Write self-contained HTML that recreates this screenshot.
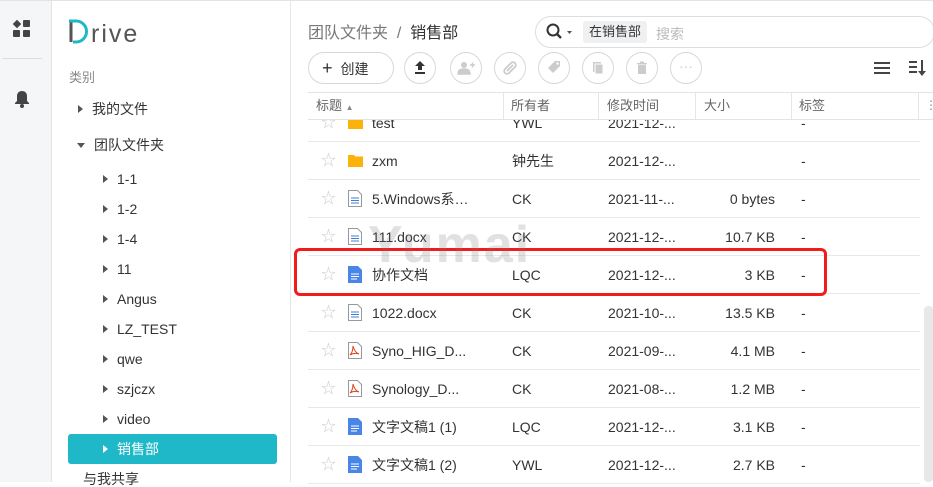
<!DOCTYPE html><html><head><meta charset="utf-8"><style>
*{box-sizing:border-box;margin:0;padding:0}
body{width:933px;height:481px;overflow:hidden;background:#fff;font-family:"Liberation Sans","Noto Sans CJK SC",sans-serif;color:#333;position:relative;font-size:14px;border-top:1px solid #e3e3e3}
.a{position:absolute}
.rail{left:0;top:0;width:52px;height:481px;background:#f5f6f8;border-right:1px solid #e3e3e3}
.side{left:53px;top:0;width:238px;height:481px;border-right:1px solid #e6e6e6}
.tr{position:absolute;font-size:14px;line-height:16px;color:#333;white-space:nowrap}
.tri{display:inline-block;width:0;height:0;border-left:5px solid #555;border-top:4px solid transparent;border-bottom:4px solid transparent;margin-right:9px;vertical-align:1px}
.trd{display:inline-block;width:0;height:0;border-top:5px solid #555;border-left:4px solid transparent;border-right:4px solid transparent;margin-right:9px;vertical-align:2px}
.cb{position:absolute;top:51px;width:32px;height:32px;border:1px solid #d8d8d8;border-radius:50%;background:#fff}
.row{position:absolute;left:308px;width:612px;height:38px;border-bottom:1px solid #e8e8e8;font-size:14px;color:#333}
.row span{position:absolute;top:11px;line-height:16px;white-space:nowrap}
.row span.st{left:13px;color:#ccc;font-size:15px;top:11px}
.h{position:absolute;top:97px;font-size:13px;line-height:15px;color:#666}
.sep{position:absolute;top:92px;width:1px;height:26px;background:#e6e6e6}
</style></head><body>
<div class="a rail">
 <svg class="a" style="left:12px;top:18px" width="20" height="20" viewBox="0 0 20 20"><rect x="2" y="2" width="6" height="6" transform="rotate(45 5 5)" fill="#444"/><rect x="11" y="1" width="7" height="7" rx="1" fill="#444"/><rect x="1" y="11" width="7" height="7" rx="1" fill="#444"/><rect x="11" y="11" width="7" height="7" rx="1" fill="#444"/></svg>
 <div class="a" style="left:2px;top:57px;width:40px;height:1px;background:#ddd"></div>
 <svg class="a" style="left:14px;top:89px" width="16" height="18" viewBox="0 0 16 18"><path d="M8 1c-3 0-5 2-5 5v5l-2 2v1h14v-1l-2-2V6c0-3-2-5-5-5z" fill="#444"/><circle cx="8" cy="16" r="2" fill="#444"/></svg>
</div>
<div class="a side">
 <svg class="a" style="left:16px;top:17px" width="80" height="28" viewBox="0 0 80 28"><path d="M2 3v21" stroke="#555" stroke-width="3"/><path d="M0 3h7a10.5 10.5 0 0 1 0 21H4" stroke="#1fb8c8" stroke-width="3" fill="none"/><text x="22" y="24" font-family="Liberation Sans,sans-serif" font-size="25" fill="#555" letter-spacing="2">rive</text></svg>
 <div class="a" style="left:16px;top:66px;font-size:13px;color:#888">类别</div>
</div>
<div class="tr" style="left:78px;top:100px"><i class="tri"></i>我的文件</div>
<div class="tr" style="left:77px;top:136px"><i class="trd"></i>团队文件夹</div>
<div class="tr" style="left:103px;top:170px"><i class="tri"></i>1-1</div>
<div class="tr" style="left:103px;top:200px"><i class="tri"></i>1-2</div>
<div class="tr" style="left:103px;top:230px"><i class="tri"></i>1-4</div>
<div class="tr" style="left:103px;top:260px"><i class="tri"></i>11</div>
<div class="tr" style="left:103px;top:290px"><i class="tri"></i>Angus</div>
<div class="tr" style="left:103px;top:320px"><i class="tri"></i>LZ_TEST</div>
<div class="tr" style="left:103px;top:350px"><i class="tri"></i>qwe</div>
<div class="tr" style="left:103px;top:380px"><i class="tri"></i>szjczx</div>
<div class="tr" style="left:103px;top:410px"><i class="tri"></i>video</div>
<div class="a" style="left:68px;top:433px;width:209px;height:30px;background:#1fb8c8;border-radius:3px"></div>
<div class="tr" style="left:103px;top:440px;color:#fff"><i class="tri" style="border-left-color:#fff"></i>销售部</div>
<div class="tr" style="left:83px;top:470px">与我共享</div>

<div class="a" style="left:308px;top:24px;font-size:16px;line-height:18px;color:#777">团队文件夹 &nbsp;/ &nbsp;<span style="color:#333">销售部</span></div>
<div class="a" style="left:535px;top:15px;width:400px;height:32px;border:1px solid #ddd;border-radius:16px"></div>
<svg class="a" style="left:546px;top:22px" width="30" height="18" viewBox="0 0 30 18"><circle cx="7" cy="7" r="5.5" stroke="#333" stroke-width="2" fill="none"/><path d="M11 11l4 4" stroke="#333" stroke-width="2.4"/><path d="M21 8h5l-2.5 3z" fill="#555"/></svg>
<div class="a" style="left:583px;top:20px;height:22px;padding:0 6px;background:#eef0f2;border-radius:3px;font-size:13px;line-height:22px">在销售部</div>
<div class="a" style="left:656px;top:23px;font-size:14px;color:#bbb">搜索</div>

<div class="a" style="left:308px;top:51px;width:86px;height:32px;border:1px solid #d8d8d8;border-radius:16px;font-size:14px;line-height:30px;padding-left:13px"><b style="font-size:18px;font-weight:normal;margin-right:8px">+</b>创建</div>
<div class="cb" style="left:404px"><svg width="30" height="30" viewBox="0 0 30 30"><path d="M15 8l-5 5h3v4h4v-4h3z M10 19h10v2H10z" fill="#333"/></svg></div>
<div class="cb" style="left:450px"><svg width="30" height="30" viewBox="0 0 30 30"><circle cx="13" cy="12" r="3" fill="#ccc"/><path d="M7 21c0-4 3-5 6-5s6 1 6 5z M19 12h5M21.5 9.5v5" fill="#ccc" stroke="#ccc" stroke-width="1.4"/></svg></div>
<div class="cb" style="left:494px"><svg width="30" height="30" viewBox="0 0 30 30"><path d="M12 18l6-6M13 13l-3 3a2.5 2.5 0 0 0 4 4l3-3M17 17l3-3a2.5 2.5 0 0 0-4-4l-3 3" stroke="#ccc" stroke-width="1.8" fill="none"/></svg></div>
<div class="cb" style="left:538px"><svg width="30" height="30" viewBox="0 0 30 30"><path d="M9 15l7-7h5v5l-7 7z" fill="#ccc"/><circle cx="18.5" cy="10.5" r="1.2" fill="#fff"/></svg></div>
<div class="cb" style="left:582px"><svg width="30" height="30" viewBox="0 0 30 30"><rect x="10" y="9" width="8" height="10" fill="#ccc"/><rect x="12" y="11" width="8" height="10" fill="#ccc" stroke="#fff"/></svg></div>
<div class="cb" style="left:626px"><svg width="30" height="30" viewBox="0 0 30 30"><path d="M10 10h10v1.5H10zM13 8.5h4v1.5h-4zM11 12h8v9h-8z" fill="#ccc"/></svg></div>
<div class="cb" style="left:670px;color:#ccc;text-align:center;line-height:26px;font-size:14px">···</div>
<svg class="a" style="left:873px;top:59px" width="18" height="16"><path d="M1 3h16M1 8h16M1 13h16" stroke="#444" stroke-width="2"/></svg>
<svg class="a" style="left:908px;top:58px" width="20" height="18"><path d="M1 3h8M1 8h8M1 13h8" stroke="#444" stroke-width="2"/><path d="M14 1v13" stroke="#444" stroke-width="2"/><path d="M10 12l4 5 4-5z" fill="#444"/></svg>

<div id="rows"></div>
<script>
var F='<svg width="15" height="13" viewBox="0 0 15 13"><path d="M0 1h6l1.5 1.5H15V13H0z" fill="#fbb30b"/></svg>';
var D='<svg width="14" height="17" viewBox="0 0 14 17"><path d="M.5.5h9l4 4v12h-13z" fill="#fff" stroke="#999"/><path d="M3 8h8M3 10.5h8M3 13h8" stroke="#3a7fd8"/></svg>';
var G='<svg width="14" height="17" viewBox="0 0 14 17"><path d="M0 0h10l4 4v13H0z" fill="#4a86e8"/><path d="M3 8h8M3 10.5h8M3 13h6" stroke="#fff"/></svg>';
var P='<svg width="14" height="17" viewBox="0 0 14 17"><path d="M.5.5h9l4 4v12h-13z" fill="#fff" stroke="#999"/><path d="M5 4c0 4-1 7-3 9 3-2 6-2 9-1-3-1-5-4-6-8z" stroke="#e0441b" fill="none"/></svg>';
var r=[[F,'test','YWL','2021-12-...','','-'],[F,'zxm','钟先生','2021-12-...','','-'],[D,'5.Windows系…','CK','2021-11-...','0 bytes','-'],[D,'111.docx','CK','2021-12-...','10.7 KB','-'],[G,'协作文档','LQC','2021-12-...','3 KB','-'],[D,'1022.docx','CK','2021-10-...','13.5 KB','-'],[P,'Syno_HIG_D...','CK','2021-09-...','4.1 MB','-'],[P,'Synology_D...','CK','2021-08-...','1.2 MB','-'],[G,'文字文稿1 (1)','LQC','2021-12-...','3.1 KB','-'],[G,'文字文稿1 (2)','YWL','2021-12-...','2.7 KB','-']];
var h='';r.forEach(function(x,i){var t=103+i*38;h+='<div class="row" style="top:'+t+'px"><span class="st">☆</span><span style="left:40px;top:'+(i<2?12:10)+'px">'+x[0]+'</span><span style="left:64px">'+x[1]+'</span><span style="left:204px">'+x[2]+'</span><span style="left:300px">'+x[3]+'</span><span style="right:145px">'+x[4]+'</span><span style="left:493px">'+x[5]+'</span></div>';});
document.getElementById('rows').innerHTML=h;
</script>
<div class="a" style="left:308px;top:91px;width:625px;height:28px;background:#fff;border-top:1px solid #e3e3e3;border-bottom:1px solid #e3e3e3"></div>
<div class="h" style="left:316px">标题 <span style="font-size:8px;color:#888">▲</span></div>
<div class="h" style="left:511px">所有者</div><div class="h" style="left:607px">修改时间</div><div class="h" style="left:704px">大小</div><div class="h" style="left:799px">标签</div>
<div class="sep" style="left:503px"></div><div class="sep" style="left:598px"></div><div class="sep" style="left:695px"></div><div class="sep" style="left:791px"></div><div class="sep" style="left:918px"></div>
<div class="a" style="left:925px;top:97px;color:#888;font-size:12px">⋮</div>
<div class="a" style="left:924px;top:305px;width:9px;height:176px;background:#e8e8e8;border-radius:4px"></div>
<div class="a" style="left:294px;top:247px;width:533px;height:48px;border:3px solid #f21b1b;border-radius:6px"></div>
<div class="a" style="left:368px;top:216px;font-size:52px;line-height:56px;font-weight:bold;color:rgba(120,120,120,.22);letter-spacing:2px">Yumai</div>
</body></html>
